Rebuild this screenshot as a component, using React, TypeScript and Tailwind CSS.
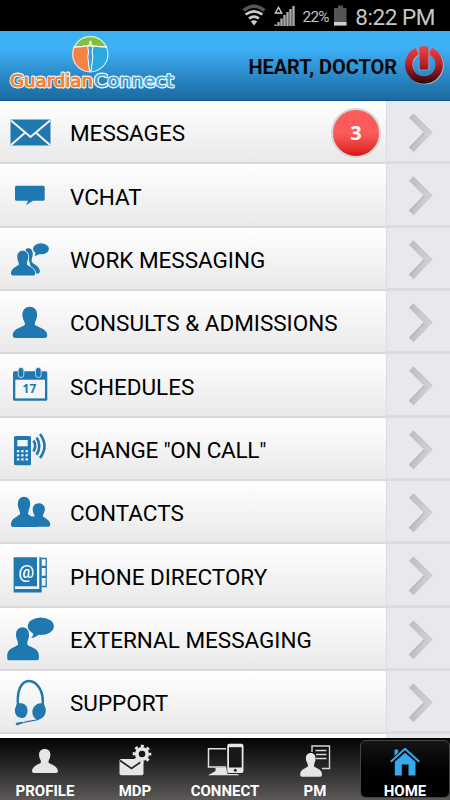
import type { ReactNode } from "react";

const BLUE = "#1f78b0";

const HandsetKeys = () => (
  <>
    {[33.2, 37.3, 41.4].map((y) =>
      [18, 22.3, 26.6].map((x) => (
        <rect key={`${x}-${y}`} x={x - 1.1} y={y - 1.1} width="2.4" height="2.2" fill="#eef4f8" />
      ))
    )}
  </>
);

const rows: { label: string; badge?: number; tight?: boolean; icon: ReactNode }[] = [
  {
    label: "MESSAGES",
    badge: 3,
    icon: (
      <>
        <rect x="10.5" y="18.4" width="40" height="26.2" rx="1" />
        <path d="M11 19.5 30.5 36 50 19.5M11 44 25.3 31.5M50 44 35.7 31.5" fill="none" stroke="#f6f6f6" strokeWidth="2" />
      </>
    ),
  },
  {
    label: "VCHAT",
    icon: <path d="M16.5 21.7H43.2Q44.7 21.7 44.7 23.2V35.3Q44.7 36.8 43.2 36.8H33L26 41.3 28 36.8H16.5Q15 36.8 15 35.3V23.2Q15 21.7 16.5 21.7Z" />,
  },
  {
    label: "WORK MESSAGING",
    icon: (
      <>
        <path d="M25.5 21.8C28.5 18.5 33 21 32.8 26C32.7 29 31.4 30.5 31.7 33.5C32.7 36.5 39.4 37.5 39.9 43Q40 45.8 37.5 45.6H33Z" />
        <path d="M22.7 22.7C26.8 22.7 28.6 26 28.1 30C27.6 33 26.9 34 26.9 36.6C28.8 39 34.7 39.6 35.3 45Q35.5 47.6 33.2 47.6H13.2Q10.8 47.6 11 45C11.5 39.6 17.2 39 18.9 36.6C18.9 34 17.7 33 17.3 30C16.8 26 18.8 22.7 22.7 22.7Z" stroke="#f6f6f6" strokeWidth="1.6" paintOrder="stroke" />
        <ellipse cx="41" cy="20.8" rx="8" ry="5.5" />
        <path d="M36.5 23 34.5 28.2 41 25.5Z" />
      </>
    ),
  },
  {
    label: "CONSULTS & ADMISSIONS",
    icon: <path d="M29.8 15.7C35 15.7 37.8 20 37 25.5C36.5 29 34.8 30.5 34.7 33.8C38 36.5 46.8 37.5 47.3 44Q47.5 46.9 44.5 46.9H15.5Q12.5 46.9 12.7 44C13.2 37.5 22 36.5 25 33.8C24.9 30.5 23 29 22.5 25.5C21.8 20 24.5 15.7 29.8 15.7Z" />,
  },
  {
    label: "SCHEDULES",
    icon: (
      <>
        <rect x="13" y="17.3" width="34.3" height="29.4" rx="1.5" />
        <rect x="15.3" y="25.7" width="29.7" height="18.7" fill="#f3f5f7" />
        <rect x="18.2" y="13.4" width="5.6" height="10.2" rx="2.8" stroke="#dfe9f0" strokeWidth=".8" />
        <rect x="35.5" y="13.4" width="5.6" height="10.2" rx="2.8" stroke="#dfe9f0" strokeWidth=".8" />
        <text x="29.5" y="39.3" textAnchor="middle" fontFamily="Open Sans" fontWeight="700" fontSize="11.8" letterSpacing=".3">17</text>
      </>
    ),
  },
  {
    label: 'CHANGE "ON CALL"',
    tight: true,
    icon: (
      <>
        <rect x="14" y="18" width="17" height="29.3" rx="1.5" />
        <rect x="17.3" y="22" width="10.4" height="6.3" fill="#f3f5f7" />
        <HandsetKeys />
        <path d="M33.5 22.5Q36.8 27.8 33.5 33.5M36.6 19.5Q42 28 36.6 36.7M40 16Q49 28 40 40" fill="none" stroke={BLUE} strokeWidth="2.6" />
      </>
    ),
  },
  {
    label: "CONTACTS",
    icon: (
      <>
        <path d="M38.8 22.2C43 22.2 45.5 25.5 44.8 29.5C44.3 32 43 33.5 42.7 35.2C45 37.5 50 38.5 50.3 43.5Q50.3 45.8 48 45.8H35L30 36 34.8 35.3C34 33 33.2 32 32.8 29.5C32.3 25.5 34.8 22.2 38.8 22.2Z" />
        <path d="M24 15.8C28.5 15.8 30.8 20 30 24.8C29.5 28 28.3 29.5 28 33C31 36 38 37 38.3 43.5Q38.3 45.9 36 45.9H13.2Q10.8 45.9 10.9 43.5C11.3 37 17.5 36 20.2 33C20 29.5 18.3 28 17.9 24.8C17.2 20 19.5 15.8 24 15.8Z" />
      </>
    ),
  },
  {
    label: "PHONE DIRECTORY",
    icon: (
      <>
        <path d="M14.3 13.2H37V42.3H14.9V45H39.3V13.2H41.7V48.5H14.3Q13.6 48.5 13.6 47.5V14Q13.6 13.2 14.3 13.2Z" />
        <path d="M41.7 14.5H46.2V22.3H41.7M41.7 23.3H46.2V32.3H41.7M41.7 33.3H46.2V42.5H41.7" fill="none" stroke={BLUE} strokeWidth="1.3" />
        <text x="26.3" y="34" textAnchor="middle" fontFamily="Roboto" fontWeight="500" fontSize="17.5" fill="#fff">@</text>
      </>
    ),
  },
  {
    label: "EXTERNAL MESSAGING",
    icon: (
      <>
        <path d="M22.6 19.2C27 19.2 29.5 23 29 28C28.6 31.5 27.3 32.5 27.2 36.5C29 39 38.2 39.5 38.9 47V50.5Q38.9 52.2 37 52.2H9Q7.2 52.2 7.2 50.5V47C7.8 39.5 16.5 39 18.1 36.5C18 32.5 16.5 31.5 16 28C15.5 23 18.2 19.2 22.6 19.2Z" />
        <ellipse cx="40.8" cy="18.2" rx="13" ry="8.8" />
        <path d="M32.5 23Q34.5 27 31 30.2 37.5 29 40 25Z" />
      </>
    ),
  },
  {
    label: "SUPPORT",
    icon: (
      <>
        <path d="M18 34.5C16.7 20 21 9.9 29 9.9S44.5 21 42.5 34.5" fill="none" stroke={BLUE} strokeWidth="2.5" />
        <path d="M16.5 33.5C20 31 27.5 32 27.5 39.5C27.5 45.5 24 47.8 20.3 46.8C16 45.8 14.5 42 15 38Z" />
        <path d="M44 33C39.5 30.5 33 34 32.4 40C32 45 35 49 39 48.2C43.5 47.3 46.3 43 45.8 38Z" />
        <path d="M40.5 46.5C39 50 31 49.3 23.5 51.5L17 53.2" fill="none" stroke={BLUE} strokeWidth="1.2" />
        <path d="M15.5 52 22 50.8 22.5 52.3 16.7 54.6Z" />
      </>
    ),
  },
];

const Chevron = () => (
  <svg width="63" height="60" viewBox="0 0 63 60">
    <defs>
      <linearGradient id="chevron" x1="22" y1="0" x2="46" y2="0" gradientUnits="userSpaceOnUse">
        <stop offset="0" stopColor="#bdbdbf" />
        <stop offset="1" stopColor="#d3d4d3" />
      </linearGradient>
    </defs>
    <path d="M22.3 17 26.5 13 45.3 31.9 26.5 51.3 22.3 47 37 32Z" fill="url(#chevron)" />
    <path d="M22.3 17 26.5 13 45.3 31.9" fill="none" stroke="#b9babb" strokeWidth="1" />
    <path d="M37 32 22.3 47" fill="none" stroke="#b3b4b5" strokeWidth="1.1" />
  </svg>
);

const tabs: { label: string; active?: boolean; icon: ReactNode }[] = [
  {
    label: "PROFILE",
    icon: <path d="M44.7 11C49 11 51 14 50.2 18.5C49.8 21 48.5 22 48.4 24.5C50.5 26.5 57.5 27.5 58 33Q58 35 56 35H34Q31.8 35 32 33C32.5 27.5 39 26.5 41 24.5C41 22 39.6 21 39.2 18.5C38.5 14 40.5 11 44.7 11Z" />,
  },
  {
    label: "MDP",
    icon: (
      <>
        <rect x="29.5" y="21" width="24" height="16.3" rx="1.7" />
        <path d="M30 22.5 41.5 30.5 53 22.5" fill="none" stroke="#242323" strokeWidth="1.7" />
        <circle cx="52" cy="16" r="5.2" fill="none" stroke="#e6e6e6" strokeWidth="3.8" />
        <circle cx="52" cy="16" r="8" fill="none" stroke="#e6e6e6" strokeWidth="2.6" strokeDasharray="3.1 3.18" strokeDashoffset="1.5" />
      </>
    ),
  },
  {
    label: "CONNECT",
    icon: (
      <>
        <path d="M46 10.8H28.5V29H46" fill="none" stroke="#e0e0e0" strokeWidth="1.5" />
        <path d="M35.5 29.5H46.5L47.5 36H58.5V37.3H28L35.5 33Z" />
        <rect x="47.2" y="5.8" width="16.3" height="29.3" rx="2.2" stroke="#1b1b1b" strokeWidth="1" paintOrder="stroke" />
        <rect x="49" y="9.2" width="12.7" height="20.3" fill="#181818" />
        <circle cx="55.3" cy="32.2" r="1.5" fill="#282828" />
      </>
    ),
  },
  {
    label: "PM",
    icon: (
      <>
        <path d="M42 14V8H59.5V30.5H52" fill="none" stroke="#d8d8d8" strokeWidth="1.4" />
        <path d="M45.5 12.5H56.5M46 16.5H56.5M46 20.5H56.5" stroke="#d8d8d8" strokeWidth="1.3" />
        <path d="M40.7 15C44.5 15 46 18 45.5 22C45 24.5 44 25.5 44 28.5C45.5 30 51.7 31 52 36Q52.2 38.7 50 38.7H32Q30 38.7 30.2 36C30.5 31 36.5 30 38 28.5C38 25.5 36.5 24.5 36 22C35.5 18 37 15 40.7 15Z" />
      </>
    ),
  },
  {
    label: "HOME",
    active: true,
    icon: (
      <>
        <path d="M34.8 23.8 45 14.8 55.5 23.8V37.5H48.5V26.5H41.8V37.5H34.8Z" />
        <path d="M30.8 23.7 45 10.8 59.3 23.7" fill="none" stroke="#35a9ef" strokeWidth="2.1" />
        <path d="M34.5 11.5H38.2V14.5L34.5 18Z" />
      </>
    ),
  },
];

export default function App() {
  return (
    <div className="flex h-[800px] w-[450px] flex-col overflow-hidden bg-black font-['Roboto',sans-serif]">
      {/* Status bar */}
      <div className="flex h-[31px] shrink-0 items-center justify-end pr-[15px] text-[#c8c8c8]">
        <svg width="92" height="31" viewBox="0 0 92 31" className="shrink-0">
          <path d="M1.5 10.5Q12 2 22.5 10.5" fill="none" stroke="#555" strokeWidth="3.5" />
          <g fill="none" stroke="#ccc" strokeWidth="2.6">
            <path d="M3.6 14.6Q12 8 20.4 14.6M7 18.5Q12 14.7 17 18.5" />
          </g>
          <path d="M8.8 21.5Q12 19.2 15.2 21.5L12 25.5Z" fill="#ccc" />
          <path d="M33.3 13 36.5 7.5 39.7 13Z" fill="none" stroke="#ccc" strokeWidth="1.4" />
          <path d="M33.5 26V24.5M36.5 26V22M39.5 26V18.5M42.5 26V15M45.5 26V12M48.5 26V9M51.5 26V6" stroke="#aaa" strokeWidth="2.4" />
          <text x="60.5" y="22.3" fontFamily="Roboto" fontSize="15.3" fill="#c4c4c4" textLength="27">22%</text>
        </svg>
        <svg width="13" height="31" viewBox="0 0 13 31" className="mr-[8px] shrink-0">
          <path d="M0 8H4V5.5H9V8H12.5V25.5H0Z" fill="#555" />
          <path d="M0 22H12.5V25.5H0Z" fill="#d0d0d0" />
        </svg>
        <span className="pt-[4px] text-[22.5px] tracking-[-0.45px] whitespace-nowrap">8:22 PM</span>
      </div>

      {/* Header */}
      <header className="flex h-[70px] shrink-0 items-center border-b border-[#075493] bg-linear-to-b from-[#3db0f6] from-25% to-[#1b699f]">
        <svg width="180" height="69" viewBox="0 0 180 69" className="shrink-0">
          <circle cx="90.3" cy="23.2" r="17.6" fill="#29a9e0" />
          <path d="M90.3 15.5H73.5A17.6 17.6 0 0 0 90.3 40.8Z" fill="#f58345" />
          <path d="M74 15.5A17.5 17.5 0 0 1 106.6 15.5L90.3 17Z" fill="#80bf40" />
          <circle cx="90.3" cy="23.2" r="17.6" fill="none" stroke="#d7ebf7" strokeWidth="1.2" />
          <path d="M73.6 16Q82 15.8 88 14.6L90.3 13.6 92.6 14.6Q99 15.8 107 16" fill="none" stroke="#fff" strokeWidth="1.3" />
          <path d="M87.6 15.2 88.5 21 87.8 26 89.4 39.5H91.2L92.8 26 92.1 21 93 15.2Z" fill="#3a9fd8" stroke="#fff" strokeWidth="1" />
          <ellipse cx="90.4" cy="11.8" rx="1.4" ry="2" fill="#fff" />
          <g fontFamily="DejaVu Sans" fontSize="17.5" stroke="#f4f8fb" strokeWidth="2.8" strokeLinejoin="round" paintOrder="stroke">
            <text x="10" y="56.3" textLength="83" lengthAdjust="spacingAndGlyphs" fill="#f58233">Guardian</text>
            <text x="94" y="56.3" textLength="79.5" lengthAdjust="spacingAndGlyphs" fill="#3aa9e2">Connect</text>
          </g>
          {/* second pass thickens the orange and blue letters inside the white outline */}
          <g fontFamily="DejaVu Sans" fontSize="17.5" strokeWidth=".7">
            <text x="10" y="56.3" textLength="83" lengthAdjust="spacingAndGlyphs" fill="#f58233" stroke="#f58233">Guardian</text>
            <text x="94" y="56.3" textLength="79.5" lengthAdjust="spacingAndGlyphs" fill="#3aa9e2" stroke="#3aa9e2" strokeWidth=".3">Connect</text>
          </g>
        </svg>
        <span className="ml-auto pt-[2px] text-[20px] font-bold tracking-[-0.05px] whitespace-nowrap text-[#080808]">HEART, DOCTOR</span>
        <svg width="53" height="69" viewBox="0 0 53 69" className="shrink-0">
          <defs>
            <linearGradient id="power" x1="0" y1="15" x2="0" y2="54" gradientUnits="userSpaceOnUse">
              <stop offset="0" stopColor="#f24447" />
              <stop offset=".45" stopColor="#b92329" />
              <stop offset="1" stopColor="#260306" />
            </linearGradient>
          </defs>
          <path d="M20.5 19.5A15.3 15.3 0 1 0 33.5 19.5" transform="translate(.9 1.2)" fill="none" stroke="#c5b9bf" strokeWidth="7" />
          <path d="M20.5 20A15.2 15.2 0 1 0 33.5 20" fill="none" stroke="url(#power)" strokeWidth="7.4" />
          <rect x="21.5" y="15.5" width="11" height="24" rx="1.5" fill="#6fa9cf" />
          <rect x="22.6" y="15.7" width="8.6" height="23" rx="1.5" fill="url(#power)" stroke="#d6484c" strokeWidth=".6" />
        </svg>
      </header>

      {/* Menu */}
      <main className="min-h-0 flex-1 overflow-hidden bg-white">
        {rows.map((row) => (
          <div key={row.label} className="flex h-[63.35px]">
            <div className="flex flex-1 items-center border-b-2 border-[#d9d9d9] bg-linear-to-b from-white to-[#e9e9e9]">
              <svg width="60" height="63" viewBox="0 0 60 63" fill={BLUE} className="shrink-0 self-start">
                {row.icon}
              </svg>
              <span
                className={
                  row.tight
                    ? "ml-[10px] pt-[5px] text-[22.5px] tracking-[-0.27px] whitespace-nowrap text-black"
                    : "ml-[10px] pt-[5px] text-[22.5px] tracking-[-0.02px] whitespace-nowrap text-black"
                }
              >
                {row.label}
              </span>
              {row.badge && (
                <span className="mt-[2px] mr-[5px] ml-auto flex size-[50px] items-center justify-center rounded-full border-2 border-[#d6d6d6] bg-linear-to-b from-[#fb5b5b] from-50% to-[#d90e0e] pt-px font-['Open_Sans',sans-serif] text-[20px] font-bold text-white">
                  {row.badge}
                </span>
              )}
            </div>
            <div className="w-16 border-b-3 border-l border-[#dcdcdc] bg-[#e8e9ef]">
              <Chevron />
            </div>
          </div>
        ))}
        <div className="flex h-4">
          <div className="flex-1 bg-white" />
          <div className="w-16 bg-[#e8e9ef]" />
        </div>
      </main>

      {/* Tab bar */}
      <nav className="grid h-[62px] shrink-0 grid-cols-5 grid-rows-[62px] bg-linear-to-b from-[#050505] to-[#5d5959]">
        {tabs.map((tab) => (
          <div
            key={tab.label}
            className={
              tab.active
                ? "mt-[2px] mb-[2px] flex flex-col items-center rounded-md border border-[#444] bg-linear-to-b from-[#151515] to-black text-white"
                : "flex flex-col items-center pt-[3px] text-white"
            }
          >
            <svg width="90" height="41" viewBox="0 3 90 41" fill={tab.active ? "#35a9ef" : "#e6e6e6"} className="shrink-0">
              {tab.icon}
            </svg>
            <span className="text-[15px] leading-[18px] font-bold">{tab.label}</span>
          </div>
        ))}
      </nav>
    </div>
  );
}
